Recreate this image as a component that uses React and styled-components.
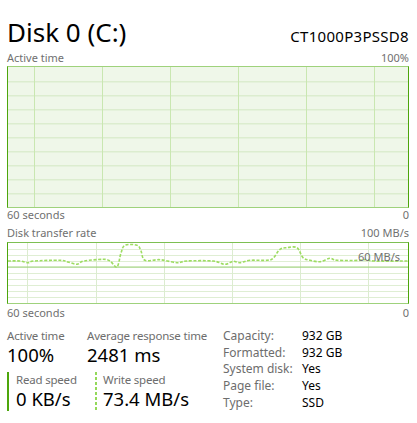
import React from 'react';
import styled, { createGlobalStyle } from 'styled-components';

/* ───────── global ───────── */

const GlobalStyle = createGlobalStyle`
  html, body {
    margin: 0;
    padding: 0;
    background: #ffffff;
  }
  body {
    font-family: "Noto Sans", "Open Sans", sans-serif;
    color: #000000;
  }
`;

/* ───────── data ───────── */

const writePoints = [
  [0, 18], [12, 18], [20, 19.7], [26, 18], [52, 17.3], [60, 19], [69, 21.3],
  [76, 18], [95, 16.3], [102, 18], [109, 24], [113, 10], [117, 2.3], [129, 2.3],
  [133, 8], [137, 17.3], [152, 16.7], [169, 19.7], [179, 18], [205, 18],
  [217, 21.3], [225, 18.3], [232, 19.7], [242, 17.3], [259, 17.3], [265, 15.3],
  [272, 6.3], [279, 4.7], [289, 4.7], [295, 14.7], [302, 17.3], [312, 18.7],
  [322, 15.3], [329, 17.3], [352, 17.3], [359, 16.3], [366, 18], [400, 18],
];

const details = [
  ['Capacity:', '932 GB'],
  ['Formatted:', '932 GB'],
  ['System disk:', 'Yes'],
  ['Page file:', 'Yes'],
  ['Type:', 'SSD'],
];

// catmull-rom -> cubic bezier, keeps the line soft like the task manager graph
const smoothPath = (pts) => {
  let d = `M${pts[0][0]},${pts[0][1]}`;
  for (let i = 0; i < pts.length - 1; i++) {
    const p0 = pts[i - 1] || pts[i];
    const p1 = pts[i];
    const p2 = pts[i + 1];
    const p3 = pts[i + 2] || p2;
    const c1x = p1[0] + (p2[0] - p0[0]) / 6;
    const c1y = p1[1] + (p2[1] - p0[1]) / 6;
    const c2x = p2[0] - (p3[0] - p1[0]) / 6;
    const c2y = p2[1] - (p3[1] - p1[1]) / 6;
    d += ` C${c1x.toFixed(1)},${c1y.toFixed(1)} ${c2x.toFixed(1)},${c2y.toFixed(1)} ${p2[0]},${p2[1]}`;
  }
  return d;
};

/* ───────── styled-components ───────── */

const Page = styled.div`
  width: 402px;
  padding: 0 8px 0 7px;
`;

const Header = styled.div`
  display: flex;
  justify-content: space-between;
  align-items: baseline;
  padding-top: 16px;
`;

const Title = styled.h1`
  margin: 0;
  font-size: 26px;
  font-weight: 400;
  line-height: 32px;
  color: #000000;
`;

const Model = styled.div`
  font-size: 15px;
  line-height: 18px;
  letter-spacing: 0.3px;
  color: #000000;
`;

const AxisRow = styled.div`
  display: flex;
  justify-content: space-between;
  font-size: 11px;
  line-height: 14px;
  color: #707070;
  margin-top: ${(p) => p.$gap || 0}px;
`;

const ChartFrame = styled.div`
  position: relative;
  box-sizing: border-box;
  height: ${(p) => p.$height}px;
  margin-top: ${(p) => p.$gap || 0}px;
  border-left: 1px solid #4da60c;
  border-right: 1px solid #4da60c;
  border-top: 1px solid ${(p) => p.$edge};
  border-bottom: 1px solid #9fd27c;
  background: ${(p) => p.$fill};

  svg {
    display: block;
  }
`;

const ScaleLabel = styled.span`
  position: absolute;
  right: 8px;
  top: 7px;
  font-size: 11px;
  line-height: 14px;
  color: #707070;
`;

const Stats = styled.div`
  display: flex;
  margin-top: 8px;
`;

const Metrics = styled.div`
  display: grid;
  grid-template-columns: 80px 130px;
  row-gap: 5px;
  width: 216px;
`;

const Metric = styled.div`
  display: flex;
  flex-direction: column;
`;

const SpeedMetric = styled(Metric)`
  margin-left: ${(p) => (p.$dashed ? '8px' : '0')};
  ${(p) =>
    p.$dashed
      ? `
    background-image: repeating-linear-gradient(to bottom, #94d95a 0 3px, transparent 3px 5px);
    background-size: 2px 100%;
    background-repeat: no-repeat;
    padding-left: 8px;
  `
      : `
    border-left: 2px solid #4da60c;
    padding-left: 7px;
  `}
`;

const MetricLabel = styled.span`
  font-size: 11.5px;
  line-height: 16px;
  letter-spacing: -0.2px;
  color: #6d6d6d;
  white-space: nowrap;
`;

const MetricValue = styled.span`
  font-size: 18.5px;
  line-height: 22px;
  color: #000000;
  white-space: nowrap;
`;

const InfoTable = styled.div`
  display: grid;
  grid-template-columns: 79px auto;
  grid-auto-rows: 16.67px;
  align-content: start;
  font-size: 12px;
  line-height: 16.67px;
`;

const InfoKey = styled.span`
  color: #6d6d6d;
`;

const InfoValue = styled.span`
  color: #000000;
`;

/* ───────── charts ───────── */

const ActiveTimeChart = () => {
  const rows = [14, 28, 42, 56, 70, 84, 98, 112, 126];
  const cols = [26, 94, 162, 230, 298, 366];
  return (
    <ChartFrame $height={142} $gap={1} $edge="#9fd27c" $fill="#eff7e9">
      <svg width="400" height="140" viewBox="0 0 400 140">
        {rows.map((y) => (
          <rect key={y} x="0" y={y} width="400" height="1.5" fill="#dcedcf" />
        ))}
        {cols.map((x) => (
          <rect key={x} x={x} y="0" width="1" height="140" fill="#c9e7b1" />
        ))}
      </svg>
    </ChartFrame>
  );
};

const TransferChart = () => {
  const rows = [6, 12, 18, 30, 36, 42, 48, 54];
  const cols = [19, 88, 156, 224, 292, 360];
  return (
    <ChartFrame $height={62} $gap={2} $edge="#7dbf52" $fill="#ffffff">
      <svg width="400" height="60" viewBox="0 0 400 60">
        {rows.map((y) => (
          <rect key={y} x="0" y={y} width="400" height="1" fill="#dfeed3" />
        ))}
        {cols.map((x) => (
          <rect key={x} x={x} y="0" width="1" height="60" fill="#dcecd0" />
        ))}
        <rect x="0" y="23.5" width="400" height="1.2" fill="#9fd27c" />
        <path
          d={smoothPath(writePoints)}
          fill="none"
          stroke="#9ddc62"
          strokeWidth="1.6"
          strokeDasharray="3 1.6"
        />
      </svg>
      <ScaleLabel>60 MB/s</ScaleLabel>
    </ChartFrame>
  );
};

/* ───────── component ───────── */

const App = () => {
  return (
    <Page>
      <GlobalStyle />
      <Header>
        <Title>Disk 0 (C:)</Title>
        <Model>CT1000P3PSSD8</Model>
      </Header>

      <AxisRow $gap={3}>
        <span>Active time</span>
        <span>100%</span>
      </AxisRow>
      <ActiveTimeChart />
      <AxisRow>
        <span>60 seconds</span>
        <span>0</span>
      </AxisRow>

      <AxisRow $gap={4}>
        <span>Disk transfer rate</span>
        <span>100 MB/s</span>
      </AxisRow>
      <TransferChart />
      <AxisRow $gap={2}>
        <span>60 seconds</span>
        <span>0</span>
      </AxisRow>

      <Stats>
        <Metrics>
          <Metric>
            <MetricLabel>Active time</MetricLabel>
            <MetricValue>100%</MetricValue>
          </Metric>
          <Metric>
            <MetricLabel>Average response time</MetricLabel>
            <MetricValue>2481 ms</MetricValue>
          </Metric>
          <SpeedMetric>
            <MetricLabel>Read speed</MetricLabel>
            <MetricValue>0 KB/s</MetricValue>
          </SpeedMetric>
          <SpeedMetric $dashed>
            <MetricLabel>Write speed</MetricLabel>
            <MetricValue>73.4 MB/s</MetricValue>
          </SpeedMetric>
        </Metrics>

        <InfoTable>
          {details.map(([k, v]) => (
            <React.Fragment key={k}>
              <InfoKey>{k}</InfoKey>
              <InfoValue>{v}</InfoValue>
            </React.Fragment>
          ))}
        </InfoTable>
      </Stats>
    </Page>
  );
};

export default App;
